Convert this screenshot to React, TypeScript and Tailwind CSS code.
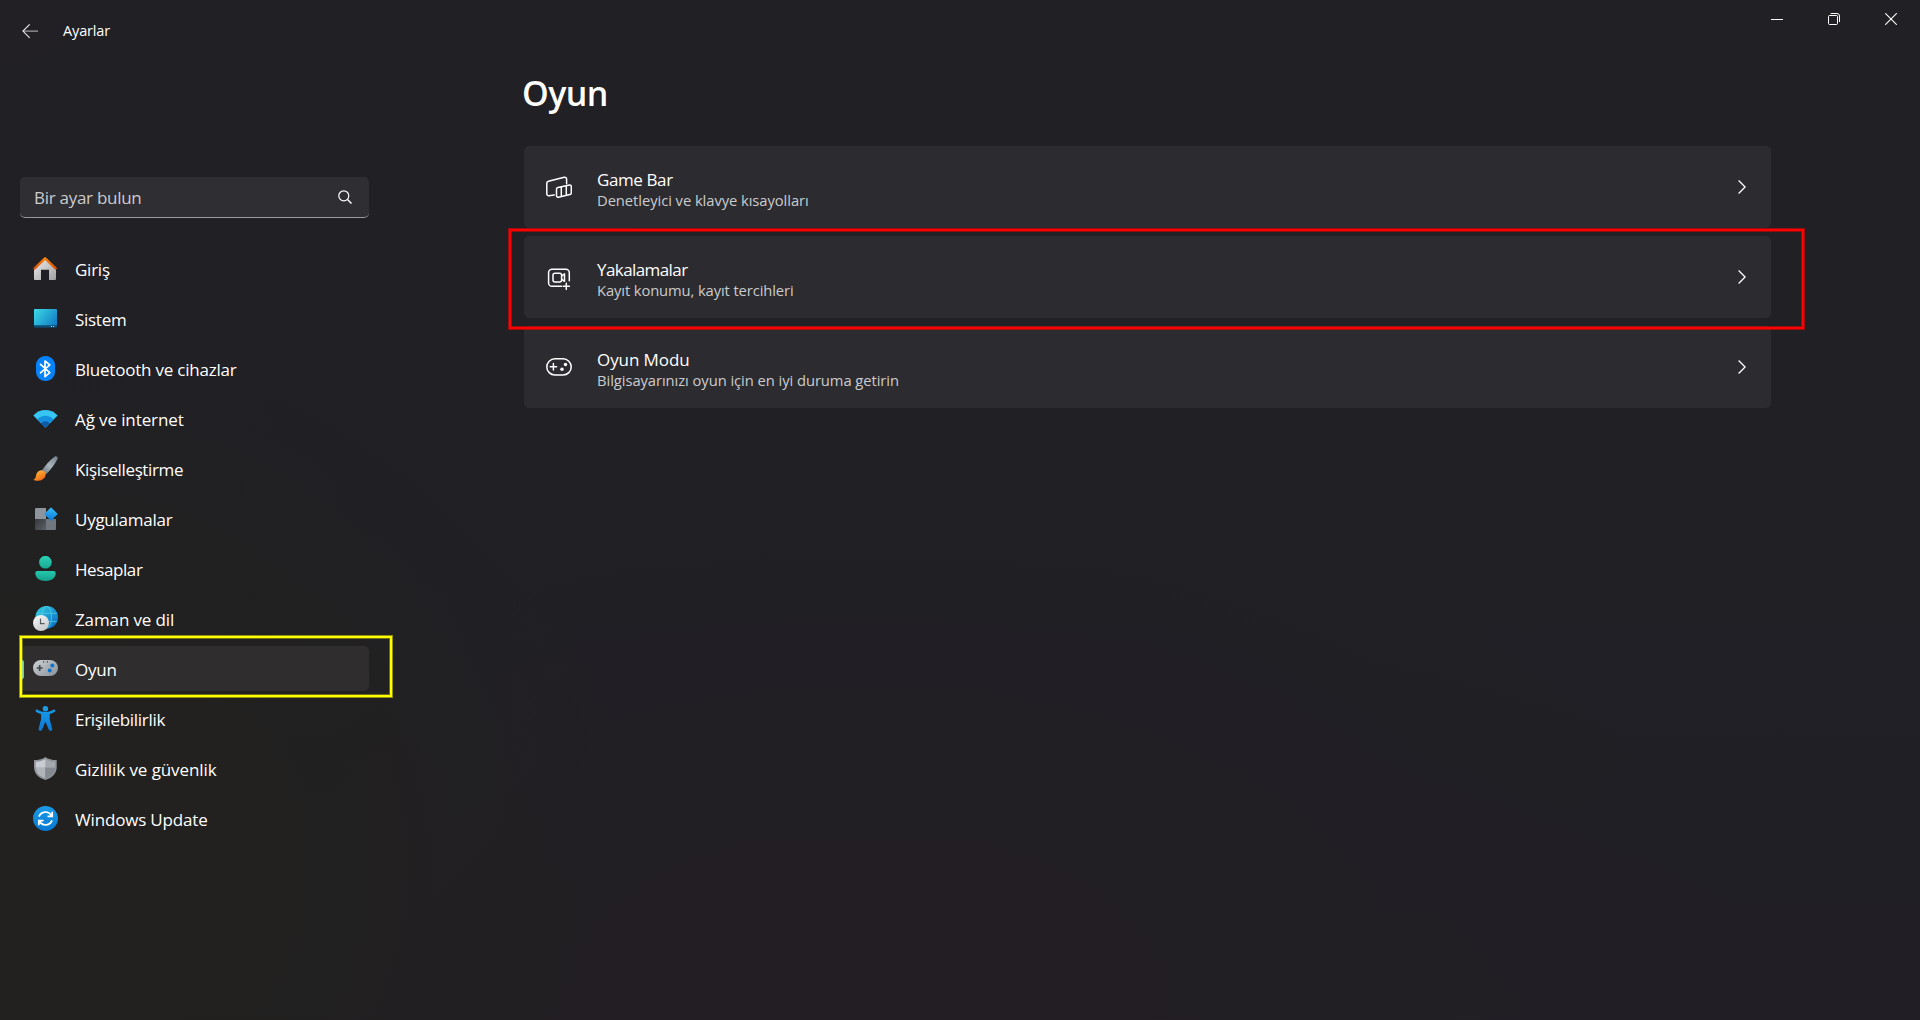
import type { ReactNode } from "react";
import clsx from "clsx";

function NavSvg({ children }: { children: ReactNode }) {
  return (
    <svg width="25" height="25" viewBox="0 0 25 25" fill="none" className="shrink-0">
      {children}
    </svg>
  );
}

function HomeIcon() {
  return (
    <NavSvg>
      <defs>
        <linearGradient id="homeBody" x1="4" y1="6" x2="20" y2="25" gradientUnits="userSpaceOnUse">
          <stop stopColor="#e2e2e2" />
          <stop offset="1" stopColor="#a3a3a3" />
        </linearGradient>
        <linearGradient id="homeRoof" x1="12" y1="1" x2="12" y2="14" gradientUnits="userSpaceOnUse">
          <stop stopColor="#f98a06" />
          <stop offset="1" stopColor="#d94a0c" />
        </linearGradient>
      </defs>
      <path d="M12.1 3 23 13.4V23a1 1 0 0 1-1 1h-6V13.8H8V24H2a1 1 0 0 1-1-1v-9.600Z" fill="url(#homeBody)" />
      <path d="M1.6 12.3 12.1 2.3l10.500 10" stroke="url(#homeRoof)" strokeWidth="2.500" strokeLinecap="round" strokeLinejoin="round" />
    </NavSvg>
  );
}

function SystemIcon() {
  return (
    <NavSvg>
      <defs>
        <linearGradient id="sysScreen" x1="1" y1="3" x2="23" y2="20" gradientUnits="userSpaceOnUse">
          <stop stopColor="#3ddbe6" />
          <stop offset="1" stopColor="#0f78c4" />
        </linearGradient>
      </defs>
      <rect x="1" y="3" width="23" height="18.700" rx="1" fill="#0c4a70" />
      <path d="M2 3h21a1 1 0 0 1 1 1v15.200H1V4a1 1 0 0 1 1-1Z" fill="url(#sysScreen)" />
      <path d="M18 20h1v1h-1zM20.200 20h1v1h-1z" fill="#c9e6f2" />
    </NavSvg>
  );
}

function BluetoothIcon() {
  return (
    <NavSvg>
      <rect x="3" y="0" width="19" height="25" rx="9" fill="#0583fb" />
      <path d="m7.500 8.300 9.300 8.300-4.800 4V5l4.800 3.900-9.300 8" stroke="#fff" strokeWidth="1.700" strokeLinejoin="round" strokeLinecap="round" />
    </NavSvg>
  );
}

function WifiIcon() {
  return (
    <NavSvg>
      <path d="M.3 9.400C7.200 2.200 17.700 2.200 24.600 9.400L12.450 21.700Z" fill="#37c5f3" />
      <path d="M4.300 13.400c4.600-4.900 11.700-4.900 16.300 0l-8.150 8.300Z" fill="#1490df" />
      <path d="M8.100 17.300c2.500-2.800 6.200-2.800 8.700 0l-4.350 4.400Z" fill="#0c59a4" />
    </NavSvg>
  );
}

function BrushIcon() {
  return (
    <NavSvg>
      <defs>
        <linearGradient id="brushHandle" x1="24" y1="1" x2="9" y2="18" gradientUnits="userSpaceOnUse">
          <stop stopColor="#76808a" />
          <stop offset=".5" stopColor="#a9b3bc" />
          <stop offset="1" stopColor="#6c757e" />
        </linearGradient>
        <linearGradient id="brushHead" x1="4" y1="15" x2="9" y2="25" gradientUnits="userSpaceOnUse">
          <stop stopColor="#fdb334" />
          <stop offset="1" stopColor="#ee6515" />
        </linearGradient>
      </defs>
      <path d="M21.800.6c1.300-1 3.600.4 2.700 2.400-2.500 5.400-7 11-11.700 15.400l-4.200-3.500C12 9.800 17 4.200 21.800.6Z" fill="url(#brushHandle)" />
      <path d="M9.200 14.400c2.100.3 3.500 1.700 3.500 3.800-.2 3.800-3.400 6.300-7.200 6.500-2.100.1-4-.2-5.300-1 1.800-.6 2.400-2 2.800-4 .6-3.400 3.200-5.600 6.200-5.300Z" fill="url(#brushHead)" />
    </NavSvg>
  );
}

function AppsIcon() {
  return (
    <NavSvg>
      <defs>
        <linearGradient id="appTile" x1="2" y1="13" x2="13" y2="24" gradientUnits="userSpaceOnUse">
          <stop stopColor="#34383c" />
          <stop offset="1" stopColor="#5b6066" />
        </linearGradient>
        <linearGradient id="appDiamond" x1="14" y1="3" x2="22" y2="13" gradientUnits="userSpaceOnUse">
          <stop stopColor="#35bdf5" />
          <stop offset="1" stopColor="#0a78dc" />
        </linearGradient>
      </defs>
      <path d="M3 2h10v11H2V3a1 1 0 0 1 1-1Z" fill="#8e949c" />
      <path d="M2 13h11v11H3a1 1 0 0 1-1-1Z" fill="url(#appTile)" />
      <path d="M13 13h10v10a1 1 0 0 1-1 1h-9Z" fill="#71777e" />
      <rect x="13.200" y="3.200" width="9.600" height="9.600" rx=".7" transform="rotate(45 18 8)" fill="url(#appDiamond)" />
    </NavSvg>
  );
}

function AccountsIcon() {
  return (
    <NavSvg>
      <defs>
        <linearGradient id="acctHead" x1="12" y1="0" x2="12" y2="12.500" gradientUnits="userSpaceOnUse">
          <stop stopColor="#2bd0b3" />
          <stop offset="1" stopColor="#18ab95" />
        </linearGradient>
        <linearGradient id="acctBody" x1="12" y1="15" x2="12" y2="25" gradientUnits="userSpaceOnUse">
          <stop stopColor="#25c9ad" />
          <stop offset="1" stopColor="#149f8b" />
        </linearGradient>
      </defs>
      <circle cx="12.400" cy="6.200" r="6.300" fill="url(#acctHead)" />
      <path d="M4.300 15h16.400a2 2 0 0 1 2 2c0 5-4.300 8-10.200 8S2.300 22 2.300 17a2 2 0 0 1 2-2Z" fill="url(#acctBody)" />
    </NavSvg>
  );
}

function TimeIcon() {
  return (
    <NavSvg>
      <defs>
        <linearGradient id="globe" x1="6" y1="2" x2="22" y2="20" gradientUnits="userSpaceOnUse">
          <stop stopColor="#2fc3dc" />
          <stop offset="1" stopColor="#0d73c8" />
        </linearGradient>
        <linearGradient id="clockFace" x1="4" y1="10" x2="12" y2="25" gradientUnits="userSpaceOnUse">
          <stop stopColor="#f4f4f4" />
          <stop offset="1" stopColor="#c4c7ca" />
        </linearGradient>
      </defs>
      <circle cx="13.700" cy="11.300" r="11.300" fill="url(#globe)" />
      <g stroke="#5fdcf2" strokeWidth=".9" opacity=".7">
        <ellipse cx="13.700" cy="11.300" rx="4.800" ry="11.100" />
        <path d="M3.600 7.300h20.200M3.600 15.500h20.200" />
      </g>
      <circle cx="8" cy="17" r="8" fill="url(#clockFace)" />
      <path d="M7.500 12.500v5.200h4" stroke="#55595d" strokeWidth="1.200" />
    </NavSvg>
  );
}

function GamingIcon() {
  return (
    <NavSvg>
      <defs>
        <linearGradient id="pad" x1="5" y1="4" x2="18" y2="21" gradientUnits="userSpaceOnUse">
          <stop stopColor="#c8cdd1" />
          <stop offset="1" stopColor="#90979e" />
        </linearGradient>
      </defs>
      <rect x="0" y="4" width="25" height="16" rx="8" fill="url(#pad)" />
      <path d="M6.700 9v6M3.700 12h6" stroke="#44484c" strokeWidth="1.700" />
      <circle cx="19.300" cy="9.400" r="2" fill="#0a74cf" />
      <circle cx="16.700" cy="14.500" r="2" fill="#0a74cf" />
      <path d="M10 5.200h1.200v1.200H10zM13.800 5.200H15v1.200h-1.200z" fill="#44484c" />
    </NavSvg>
  );
}

function AccessibilityIcon() {
  return (
    <NavSvg>
      <defs>
        <linearGradient id="access" x1="12" y1="0" x2="12" y2="25" gradientUnits="userSpaceOnUse">
          <stop stopColor="#1aa0ea" />
          <stop offset="1" stopColor="#0a78d6" />
        </linearGradient>
      </defs>
      <circle cx="12.400" cy="2.700" r="2.700" fill="url(#access)" />
      <path
        d="M4.500 3.700c2.600 1.500 5 2.200 7.900 2.200s5.300-.7 7.900-2.200c.8-.4 1.500-.1 1.800.5.300.7.100 1.400-.6 1.800-1.500.9-3.100 1.600-4.800 2.100v5.100c.8 3.200 1.700 6.300 2.400 9.600.2 1-.2 1.800-1.100 2-.9.300-1.800-.1-2.200-1l-3-7.200h-.8l-3 7.200c-.4.900-1.300 1.300-2.200 1-.9-.2-1.300-1-1.100-2 .7-3.300 1.600-6.400 2.400-9.600V8.100C6.400 7.600 4.800 6.900 3.300 6c-.7-.4-.9-1.100-.6-1.800.3-.6 1-.9 1.800-.5Z"
        fill="url(#access)"
      />
    </NavSvg>
  );
}

function ShieldIcon() {
  return (
    <NavSvg>
      <path d="M12.400 1c3 2.200 6.500 3 11.300 3.100V11c0 6-4 10.700-11.300 13.100C5 21.700 1 17 1 11V4.100C5.900 4 9.400 3.200 12.400 1Z" fill="#8d9298" />
      <path d="M12.400 3c2.700 1.700 5.800 2.500 9.700 2.700v6.100h-9.700Z" fill="#a3a8ae" />
      <path d="M12.400 3C9.700 4.700 6.600 5.500 2.700 5.700v6.100h9.700Z" fill="#c9ccd0" />
      <path d="M2.700 11.800c.3 4.900 3.700 8.600 9.700 10.700V11.800Z" fill="#b0b5ba" />
      <path d="M22.100 11.800c-.3 4.900-3.700 8.600-9.700 10.700V11.800Z" fill="#858b91" />
    </NavSvg>
  );
}

function UpdateIcon() {
  return (
    <NavSvg>
      <defs>
        <linearGradient id="upd" x1="12" y1="0" x2="12" y2="25" gradientUnits="userSpaceOnUse">
          <stop stopColor="#1b9be6" />
          <stop offset="1" stopColor="#0877d2" />
        </linearGradient>
      </defs>
      <circle cx="12.500" cy="12.500" r="12.500" fill="url(#upd)" />
      <g stroke="#fff" strokeWidth="1.700">
        <path d="M6 10.600a6.900 6.900 0 0 1 12.300-1.400M19.200 5.700v4.600h-4.700" />
        <path d="M19 14.400a6.900 6.900 0 0 1-12.300 1.400M5.800 19.300v-4.600h4.700" />
      </g>
    </NavSvg>
  );
}

function CardSvg({ children }: { children: ReactNode }) {
  return (
    <svg width="26" height="26" viewBox="0 0 26 26" fill="none" stroke="#fff" strokeWidth="1.500" strokeLinejoin="round" strokeLinecap="round" className="shrink-0">
      {children}
    </svg>
  );
}

function GameBarIcon() {
  return (
    <CardSvg>
      <path d="M8.200 20.900 3 21.700c-1.200.2-2.200-.7-2.200-1.900V9.200c0-1 .6-1.800 1.600-2l15.800-4c1.300-.3 2.400.6 2.400 1.900v4.600" />
      <path d="m12 13.500 11.400-2.400c1.100-.2 1.900.5 1.900 1.600v6.200c0 .8-.5 1.500-1.400 1.700l-11.400 2.600c-1.100.3-2-.5-2-1.600v-6.400c0-.8.600-1.500 1.500-1.700ZM15.300 13v9.400M20.300 12v9.200" />
    </CardSvg>
  );
}

function CaptureIcon() {
  return (
    <CardSvg>
      <path d="M15.500 22.300H6a3.400 3.400 0 0 1-3.400-3.400V8.600A3.400 3.400 0 0 1 6 5.200h13.900a3.400 3.400 0 0 1 3.400 3.400v8.200" />
      <rect x="7" y="9.200" width="8.600" height="8.800" rx="2" />
      <path d="m15.800 11.800 2.700-1.900v7.400l-2.700-1.900M20.300 19.200v6.200M17.200 22.300h6.200" />
    </CardSvg>
  );
}

function GameModeIcon() {
  return (
    <CardSvg>
      <rect x=".8" y="4.800" width="24.400" height="16.200" rx="8.100" />
      <path d="M7.400 9.600v6.400M4.200 12.800h6.400" />
      <circle cx="19.500" cy="10.500" r="1.700" fill="#fff" stroke="none" />
      <circle cx="16" cy="15.200" r="1.700" fill="#fff" stroke="none" />
    </CardSvg>
  );
}

const navItems = [
  { label: "Giriş", Icon: HomeIcon, tracking: "tracking-[-0.25px]" },
  { label: "Sistem", Icon: SystemIcon, tracking: "tracking-[-0.28px]" },
  { label: "Bluetooth ve cihazlar", Icon: BluetoothIcon, tracking: "tracking-[-0.22px]" },
  { label: "Ağ ve internet", Icon: WifiIcon, tracking: "tracking-[-0.11px]" },
  { label: "Kişiselleştirme", Icon: BrushIcon, tracking: "tracking-[-0.36px]" },
  { label: "Uygulamalar", Icon: AppsIcon, tracking: "tracking-[-0.26px]" },
  { label: "Hesaplar", Icon: AccountsIcon, tracking: "tracking-[-0.41px]" },
  { label: "Zaman ve dil", Icon: TimeIcon, tracking: "tracking-[-0.12px]" },
  { label: "Oyun", Icon: GamingIcon, tracking: "tracking-[-0.2px]", active: true },
  { label: "Erişilebilirlik", Icon: AccessibilityIcon, tracking: "tracking-[-0.31px]" },
  { label: "Gizlilik ve güvenlik", Icon: ShieldIcon, tracking: "tracking-[-0.08px]" },
  { label: "Windows Update", Icon: UpdateIcon, tracking: "tracking-[-0.17px]" },
];

const cards = [
  {
    title: "Game Bar",
    titleTracking: "tracking-[-0.4px]",
    text: "Denetleyici ve klavye kısayolları",
    textTracking: "tracking-[-0.06px]",
    Icon: GameBarIcon,
  },
  {
    title: "Yakalamalar",
    titleTracking: "tracking-[-0.58px]",
    text: "Kayıt konumu, kayıt tercihleri",
    textTracking: "tracking-[-0.11px]",
    Icon: CaptureIcon,
    highlighted: true,
  },
  {
    title: "Oyun Modu",
    titleTracking: "tracking-[-0.08px]",
    text: "Bilgisayarınızı oyun için en iyi duruma getirin",
    textTracking: "tracking-[-0.06px]",
    Icon: GameModeIcon,
  },
];

function TitleBar() {
  return (
    <header className="flex h-[62px] shrink-0 items-center pl-[22px]">
      <svg width="16" height="16" viewBox="0 0 16 16" fill="none" strokeWidth="1.200">
        <path d="M1 8.100h15" stroke="#a5a5a8" />
        <path d="M7.700 1.400 1 8.100l6.700 6.700" stroke="#e6e6e8" />
      </svg>
      <span className="ml-[25px] text-[14.5px] leading-5 tracking-[-0.15px] text-white">Ayarlar</span>
      <div className="ml-auto flex self-start pr-px">
        <button className="flex h-[38px] w-[57px] items-center justify-center" aria-label="Simge durumuna küçült">
          <svg width="12" height="12" viewBox="0 0 12 12">
            <path d="M0 6h12v1H0z" fill="#fff" />
          </svg>
        </button>
        <button className="flex h-[38px] w-[57px] items-center justify-center" aria-label="Önceki boyut">
          <svg width="12" height="12" viewBox="0 0 12 12" fill="none" stroke="#fff">
            <rect x=".5" y="2.500" width="9" height="9" rx="1" />
            <path d="M2.700.5H9A2.500 2.500 0 0 1 11.500 3v6" />
          </svg>
        </button>
        <button className="flex h-[38px] w-[57px] items-center justify-center" aria-label="Kapat">
          <svg width="12" height="12" viewBox="0 0 12 12" fill="none" stroke="#fff" strokeWidth="1.100">
            <path d="m.2.200 11.600 11.600M11.800.200.2 11.800" />
          </svg>
        </button>
      </div>
    </header>
  );
}

function Sidebar() {
  return (
    <aside className="w-[349px] shrink-0 pt-[115px]">
      <div className="flex h-[41px] items-center justify-between rounded-[5px] border-b border-[#9a999c] bg-[#2f2e33] pl-3.5 pr-[17px]">
        <span className="mt-0.5 text-[17px] leading-5 tracking-[-0.28px] text-[#cbcbcd]">Bir ayar bulun</span>
        <svg width="14" height="14" viewBox="0 0 14 14" fill="none" stroke="#fff" strokeWidth="1.200">
          <circle cx="5.800" cy="5.800" r="5" />
          <path d="m9.500 9.500 4 4" strokeWidth="1.500" />
        </svg>
      </div>
      <nav className="mt-7 flex flex-col gap-[5px]">
        {navItems.map(({ label, Icon, tracking, active }) => (
          <div key={label} className={clsx("relative flex h-[45px] items-center rounded-[5px] pl-[13px]", active && "bg-[#2f2d2d]")}>
            {active && <span className="absolute left-0 top-[14px] h-[19px] w-1 rounded-full bg-[#57c8e4]" />}
            <Icon />
            <span className={clsx("ml-[17px] mt-[3px] whitespace-nowrap text-[17px] leading-5 text-white", tracking)}>{label}</span>
            {active && (
              <span className="absolute -left-px -top-[11px] h-[63px] w-[374px] border border-[#ffff00]/50">
                <span className="block h-full w-full border-2 border-[#ffff00] outline outline-1 -outline-offset-3 outline-[#ffff00]/35" />
              </span>
            )}
          </div>
        ))}
      </nav>
    </aside>
  );
}

function Main() {
  return (
    <main className="ml-[155px] w-[1247px] pt-2">
      <h1 className="-ml-0.5 text-[34px] font-semibold leading-[46px] tracking-[-0.6px] text-white">Oyun</h1>
      <div className="mt-[30px] flex flex-col gap-2">
        {cards.map(({ title, titleTracking, text, textTracking, Icon, highlighted }) => (
          <div key={title} className={clsx("relative flex h-[82px] items-center rounded-[5px] bg-[#2c2b30] pl-[22px] pr-[25.500px]", highlighted && "z-10")}>
            <Icon />
            <div className="ml-[25px] flex flex-col pt-[5px]">
              <span className={clsx("text-[17px] leading-[21px] text-white", titleTracking)}>{title}</span>
              <span className={clsx("text-[14.75px] leading-[21px] text-[#cbcbcd]", textTracking)}>{text}</span>
            </div>
            <svg width="8" height="14" viewBox="0 0 8 14" fill="none" stroke="#fff" strokeWidth="1.300" className="ml-auto">
              <path d="m.6.500 6.500 6.500-6.500 6.500" />
            </svg>
            {highlighted && (
              <span className="absolute -left-4 -top-2 h-[102px] w-[1297px] border border-[#ff0000]/55">
                <span className="block h-full w-full border-2 border-[#ff0000] outline outline-1 -outline-offset-3 outline-[#ff0000]/50" />
              </span>
            )}
          </div>
        ))}
      </div>
    </main>
  );
}

export default function App() {
  return (
    <div className="flex h-[1020px] w-[1920px] flex-col overflow-hidden bg-[#202024] bg-[radial-gradient(ellipse_900px_800px_at_0%_85%,#22211f_0%,#22211f_25%,transparent_70%),radial-gradient(ellipse_900px_560px_at_45%_100%,#221e23_0%,transparent_100%),radial-gradient(ellipse_700px_600px_at_0%_0%,#222025_0%,transparent_100%),linear-gradient(180deg,#202025_0%,#202025_50%,#211f25_100%)] font-['Open_Sans',sans-serif]">
      <TitleBar />
      <div className="flex flex-1 pl-5">
        <Sidebar />
        <Main />
      </div>
    </div>
  );
}
